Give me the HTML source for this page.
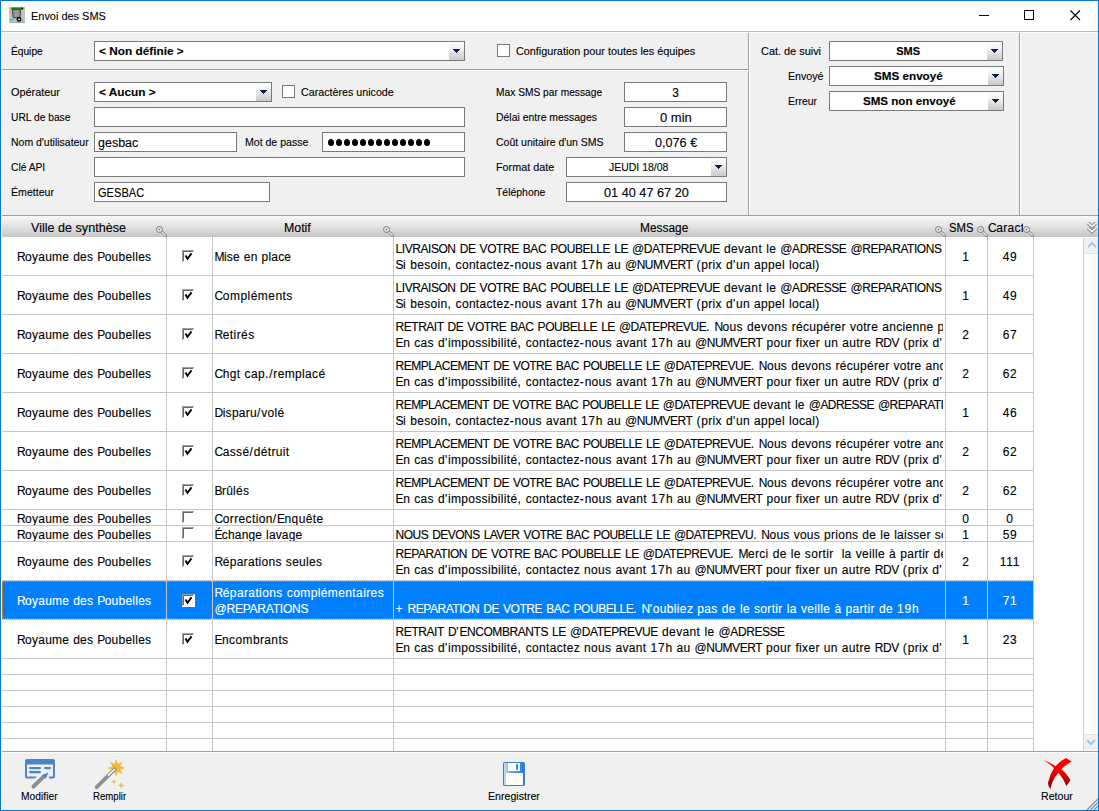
<!DOCTYPE html><html><head><meta charset="utf-8"><style>
html,body{margin:0;padding:0;}
body{width:1099px;height:811px;overflow:hidden;position:relative;background:#f0f0f0;font-family:"Liberation Sans",sans-serif;color:#000;}
.r{position:absolute;}
.t{position:absolute;white-space:nowrap;-webkit-text-stroke:0.12px currentColor;}
</style></head><body>
<div class="r" style="left:0px;top:0px;width:1099px;height:31px;background:#fff;"></div>
<div class="r" style="left:0px;top:31px;width:1099px;height:1px;background:#bababa;"></div>
<div class="r" style="left:1px;top:32px;width:1097px;height:1px;background:#fff;"></div>
<div class="r" style="left:1px;top:32px;width:1px;height:778px;background:#fff;"></div>
<svg class="r" style="left:9px;top:7px" width="16" height="16" viewBox="0 0 16 16">
<rect x="0" y="0" width="16" height="16" fill="#c2c2c2"/>
<rect x="0" y="15" width="16" height="1" fill="#a8a8a8"/>
<rect x="2" y="0.4" width="11.5" height="2" rx="1" fill="#0b8f0b"/>
<circle cx="13.3" cy="1.4" r="1" fill="#000"/>
<path d="M3.2 2.6 L11.6 2.6 L11 10.8 L4.2 10.8 Z" fill="#8c8c8c" stroke="#3a3a3a" stroke-width="0.9"/>
<rect x="5.5" y="3.5" width="4" height="6" fill="#9c9c9c"/>
<circle cx="10" cy="12.4" r="1.7" fill="#fff" stroke="#000" stroke-width="1.5"/>
<rect x="1" y="12" width="3.5" height="2" fill="#3fcbd8"/>
<rect x="12.4" y="12" width="1.6" height="2" fill="#3fcbd8"/>
</svg>
<div class="t" style="left:30.60px;top:11.27px;font-size:11.5px;line-height:11.5px;transform:scaleX(0.9513);transform-origin:0 0;">Envoi des SMS</div>
<div class="r" style="left:979px;top:15px;width:10px;height:1px;background:#000;"></div>
<div class="r" style="left:1024px;top:10px;width:10px;height:10px;border:1px solid #000;box-sizing:border-box;"></div>
<svg class="r" style="left:1070px;top:10px" width="11" height="11" viewBox="0 0 11 11"><path d="M0.5 0.5 L10 10 M10 0.5 L0.5 10" stroke="#000" stroke-width="1.1"/></svg>
<div class="r" style="left:2px;top:69px;width:747px;height:1px;background:#a0a0a0;"></div>
<div class="r" style="left:2px;top:70px;width:747px;height:1px;background:#fff;"></div>
<div class="r" style="left:748px;top:33px;width:1px;height:36px;background:#a0a0a0;"></div>
<div class="r" style="left:748px;top:71px;width:1px;height:144px;background:#a0a0a0;"></div>
<div class="r" style="left:749px;top:33px;width:1px;height:182px;background:#fff;"></div>
<div class="r" style="left:1019px;top:33px;width:1px;height:182px;background:#a0a0a0;"></div>
<div class="r" style="left:1020px;top:33px;width:1px;height:182px;background:#fff;"></div>
<div class="r" style="left:2px;top:215px;width:1096px;height:1px;background:#a0a0a0;"></div>
<div class="t" style="left:10.60px;top:45.69px;font-size:11px;line-height:11px;transform:scaleX(0.9258);transform-origin:0 0;">Équipe</div>
<div class="r" style="left:94px;top:41px;width:371px;height:20px;background:#fff;border:1px solid #7a7a7a;box-sizing:border-box;"></div>
<div class="r" style="left:449px;top:42px;width:15px;height:18px;background:linear-gradient(#ffffff,#f4f4f4 30%,#c9c9c9);"></div>
<div class="r" style="left:453px;top:49px;width:7px;height:1px;background:#0c1f44;"></div>
<div class="r" style="left:454px;top:50px;width:5px;height:1px;background:#0c1f44;"></div>
<div class="r" style="left:455px;top:51px;width:3px;height:1px;background:#0c1f44;"></div>
<div class="r" style="left:456px;top:52px;width:1px;height:1px;background:#0c1f44;"></div>
<div class="t" style="left:98.80px;top:45.69px;font-size:11px;line-height:11px;transform:scaleX(1.0737);transform-origin:0 0;font-weight:bold;">&lt; Non définie &gt;</div>
<div class="r" style="left:497px;top:44px;width:13px;height:13px;background:#fff;border:1px solid #7a7a7a;box-sizing:border-box;"></div>
<div class="t" style="left:515.70px;top:45.69px;font-size:11px;line-height:11px;transform:scaleX(0.9829);transform-origin:0 0;">Configuration pour toutes les équipes</div>
<div class="t" style="left:10.60px;top:86.69px;font-size:11px;line-height:11px;transform:scaleX(0.9887);transform-origin:0 0;">Opérateur</div>
<div class="r" style="left:94px;top:82px;width:178px;height:20px;background:#fff;border:1px solid #7a7a7a;box-sizing:border-box;"></div>
<div class="r" style="left:256px;top:83px;width:15px;height:18px;background:linear-gradient(#ffffff,#f4f4f4 30%,#c9c9c9);"></div>
<div class="r" style="left:260px;top:90px;width:7px;height:1px;background:#0c1f44;"></div>
<div class="r" style="left:261px;top:91px;width:5px;height:1px;background:#0c1f44;"></div>
<div class="r" style="left:262px;top:92px;width:3px;height:1px;background:#0c1f44;"></div>
<div class="r" style="left:263px;top:93px;width:1px;height:1px;background:#0c1f44;"></div>
<div class="t" style="left:98.80px;top:86.69px;font-size:11px;line-height:11px;transform:scaleX(1.0748);transform-origin:0 0;font-weight:bold;">&lt; Aucun &gt;</div>
<div class="r" style="left:282px;top:85px;width:13px;height:13px;background:#fff;border:1px solid #7a7a7a;box-sizing:border-box;"></div>
<div class="t" style="left:300.50px;top:86.69px;font-size:11px;line-height:11px;transform:scaleX(0.9720);transform-origin:0 0;">Caractères unicode</div>
<div class="t" style="left:10.60px;top:111.69px;font-size:11px;line-height:11px;transform:scaleX(0.9315);transform-origin:0 0;">URL de base</div>
<div class="r" style="left:94px;top:107px;width:371px;height:20px;background:#fff;border:1px solid #7a7a7a;box-sizing:border-box;"></div>
<div class="t" style="left:10.70px;top:136.69px;font-size:11px;line-height:11px;transform:scaleX(0.9522);transform-origin:0 0;">Nom d'utilisateur</div>
<div class="r" style="left:94px;top:132px;width:143px;height:20px;background:#fff;border:1px solid #7a7a7a;box-sizing:border-box;"></div>
<div class="t" style="left:98.00px;top:136.84px;font-size:12px;line-height:12px;transform:scaleX(1.0415);transform-origin:0 0;">gesbac</div>
<div class="t" style="left:244.80px;top:136.69px;font-size:11px;line-height:11px;transform:scaleX(0.9587);transform-origin:0 0;">Mot de passe</div>
<div class="r" style="left:322px;top:132px;width:143px;height:20px;background:#fff;border:1px solid #7a7a7a;box-sizing:border-box;"></div>
<div class="r" style="left:328.0px;top:139px;width:6px;height:7px;background:#000;border-radius:50%;"></div>
<div class="r" style="left:336.0px;top:139px;width:6px;height:7px;background:#000;border-radius:50%;"></div>
<div class="r" style="left:344.0px;top:139px;width:6px;height:7px;background:#000;border-radius:50%;"></div>
<div class="r" style="left:352.0px;top:139px;width:6px;height:7px;background:#000;border-radius:50%;"></div>
<div class="r" style="left:360.0px;top:139px;width:6px;height:7px;background:#000;border-radius:50%;"></div>
<div class="r" style="left:368.0px;top:139px;width:6px;height:7px;background:#000;border-radius:50%;"></div>
<div class="r" style="left:376.0px;top:139px;width:6px;height:7px;background:#000;border-radius:50%;"></div>
<div class="r" style="left:384.0px;top:139px;width:6px;height:7px;background:#000;border-radius:50%;"></div>
<div class="r" style="left:392.0px;top:139px;width:6px;height:7px;background:#000;border-radius:50%;"></div>
<div class="r" style="left:400.0px;top:139px;width:6px;height:7px;background:#000;border-radius:50%;"></div>
<div class="r" style="left:408.0px;top:139px;width:6px;height:7px;background:#000;border-radius:50%;"></div>
<div class="r" style="left:416.0px;top:139px;width:6px;height:7px;background:#000;border-radius:50%;"></div>
<div class="r" style="left:424.0px;top:139px;width:6px;height:7px;background:#000;border-radius:50%;"></div>
<div class="t" style="left:10.60px;top:161.69px;font-size:11px;line-height:11px;transform:scaleX(0.9319);transform-origin:0 0;">Clé API</div>
<div class="r" style="left:94px;top:157px;width:371px;height:20px;background:#fff;border:1px solid #7a7a7a;box-sizing:border-box;"></div>
<div class="t" style="left:10.60px;top:186.69px;font-size:11px;line-height:11px;transform:scaleX(0.9630);transform-origin:0 0;">Émetteur</div>
<div class="r" style="left:94px;top:182px;width:176px;height:20px;background:#fff;border:1px solid #7a7a7a;box-sizing:border-box;"></div>
<div class="t" style="left:98.00px;top:186.84px;font-size:12px;line-height:12px;transform:scaleX(0.9235);transform-origin:0 0;">GESBAC</div>
<div class="t" style="left:495.80px;top:86.69px;font-size:11px;line-height:11px;transform:scaleX(0.9282);transform-origin:0 0;">Max SMS par message</div>
<div class="r" style="left:624px;top:82px;width:103px;height:20px;background:#fff;border:1px solid #7a7a7a;box-sizing:border-box;"></div>
<div class="t" style="left:624px;top:86.84px;font-size:12px;line-height:12px;width:103px;text-align:center;">3</div>
<div class="t" style="left:495.80px;top:111.69px;font-size:11px;line-height:11px;transform:scaleX(0.9487);transform-origin:0 0;">Délai entre messages</div>
<div class="r" style="left:624px;top:107px;width:103px;height:20px;background:#fff;border:1px solid #7a7a7a;box-sizing:border-box;"></div>
<div class="t" style="left:660.40px;top:111.84px;font-size:12px;line-height:12px;transform:scaleX(1.0848);transform-origin:0 0;">0 min</div>
<div class="t" style="left:495.80px;top:136.69px;font-size:11px;line-height:11px;transform:scaleX(0.9534);transform-origin:0 0;">Coût unitaire d'un SMS</div>
<div class="r" style="left:624px;top:132px;width:103px;height:20px;background:#fff;border:1px solid #7a7a7a;box-sizing:border-box;"></div>
<div class="t" style="left:654.50px;top:136.84px;font-size:12px;line-height:12px;transform:scaleX(1.0529);transform-origin:0 0;">0,076 €</div>
<div class="t" style="left:495.80px;top:161.69px;font-size:11px;line-height:11px;transform:scaleX(0.9817);transform-origin:0 0;">Format date</div>
<div class="r" style="left:566px;top:157px;width:161px;height:20px;background:#fff;border:1px solid #7a7a7a;box-sizing:border-box;"></div>
<div class="r" style="left:711px;top:158px;width:15px;height:18px;background:linear-gradient(#ffffff,#f4f4f4 30%,#c9c9c9);"></div>
<div class="r" style="left:715px;top:165px;width:7px;height:1px;background:#0c1f44;"></div>
<div class="r" style="left:716px;top:166px;width:5px;height:1px;background:#0c1f44;"></div>
<div class="r" style="left:717px;top:167px;width:3px;height:1px;background:#0c1f44;"></div>
<div class="r" style="left:718px;top:168px;width:1px;height:1px;background:#0c1f44;"></div>
<div class="t" style="left:608.70px;top:161.69px;font-size:11px;line-height:11px;transform:scaleX(0.9527);transform-origin:0 0;">JEUDI 18/08</div>
<div class="t" style="left:495.80px;top:186.69px;font-size:11px;line-height:11px;transform:scaleX(0.9485);transform-origin:0 0;">Téléphone</div>
<div class="r" style="left:566px;top:182px;width:161px;height:20px;background:#fff;border:1px solid #7a7a7a;box-sizing:border-box;"></div>
<div class="t" style="left:604.30px;top:186.84px;font-size:12px;line-height:12px;transform:scaleX(1.0585);transform-origin:0 0;">01 40 47 67 20</div>
<div class="t" style="left:761.00px;top:45.69px;font-size:11px;line-height:11px;transform:scaleX(0.9920);transform-origin:0 0;">Cat. de suivi</div>
<div class="r" style="left:829px;top:41px;width:174px;height:20px;background:#fff;border:1px solid #7a7a7a;box-sizing:border-box;"></div>
<div class="r" style="left:987px;top:42px;width:15px;height:18px;background:linear-gradient(#ffffff,#f4f4f4 30%,#c9c9c9);"></div>
<div class="r" style="left:991px;top:49px;width:7px;height:1px;background:#0c1f44;"></div>
<div class="r" style="left:992px;top:50px;width:5px;height:1px;background:#0c1f44;"></div>
<div class="r" style="left:993px;top:51px;width:3px;height:1px;background:#0c1f44;"></div>
<div class="r" style="left:994px;top:52px;width:1px;height:1px;background:#0c1f44;"></div>
<div class="t" style="left:896.20px;top:45.69px;font-size:11px;line-height:11px;transform:scaleX(1.0000);transform-origin:0 0;font-weight:bold;">SMS</div>
<div class="t" style="left:787.70px;top:70.69px;font-size:11px;line-height:11px;transform:scaleX(0.9652);transform-origin:0 0;">Envoyé</div>
<div class="r" style="left:829px;top:66px;width:175px;height:20px;background:#fff;border:1px solid #7a7a7a;box-sizing:border-box;"></div>
<div class="r" style="left:988px;top:67px;width:15px;height:18px;background:linear-gradient(#ffffff,#f4f4f4 30%,#c9c9c9);"></div>
<div class="r" style="left:992px;top:74px;width:7px;height:1px;background:#0c1f44;"></div>
<div class="r" style="left:993px;top:75px;width:5px;height:1px;background:#0c1f44;"></div>
<div class="r" style="left:994px;top:76px;width:3px;height:1px;background:#0c1f44;"></div>
<div class="r" style="left:995px;top:77px;width:1px;height:1px;background:#0c1f44;"></div>
<div class="t" style="left:874.00px;top:70.69px;font-size:11px;line-height:11px;transform:scaleX(1.0605);transform-origin:0 0;font-weight:bold;">SMS envoyé</div>
<div class="t" style="left:787.70px;top:95.69px;font-size:11px;line-height:11px;transform:scaleX(0.9483);transform-origin:0 0;">Erreur</div>
<div class="r" style="left:829px;top:91px;width:175px;height:20px;background:#fff;border:1px solid #7a7a7a;box-sizing:border-box;"></div>
<div class="r" style="left:988px;top:92px;width:15px;height:18px;background:linear-gradient(#ffffff,#f4f4f4 30%,#c9c9c9);"></div>
<div class="r" style="left:992px;top:99px;width:7px;height:1px;background:#0c1f44;"></div>
<div class="r" style="left:993px;top:100px;width:5px;height:1px;background:#0c1f44;"></div>
<div class="r" style="left:994px;top:101px;width:3px;height:1px;background:#0c1f44;"></div>
<div class="r" style="left:995px;top:102px;width:1px;height:1px;background:#0c1f44;"></div>
<div class="t" style="left:862.50px;top:95.69px;font-size:11px;line-height:11px;transform:scaleX(1.0524);transform-origin:0 0;font-weight:bold;">SMS non envoyé</div>
<div class="r" style="left:2px;top:216px;width:1096px;height:21px;background:linear-gradient(#f8f8f8,#e2e2e2 50%,#c5c5c5);"></div>
<div class="r" style="left:2px;top:237px;width:1096px;height:514px;background:#fff;"></div>
<div class="t" style="left:31.40px;top:221.84px;font-size:12px;line-height:12px;transform:scaleX(1.0492);transform-origin:0 0;">Ville de synthèse</div>
<div class="t" style="left:284.40px;top:221.84px;font-size:12px;line-height:12px;transform:scaleX(1.0274);transform-origin:0 0;">Motif</div>
<div class="t" style="left:639.60px;top:221.84px;font-size:12px;line-height:12px;transform:scaleX(0.9915);transform-origin:0 0;">Message</div>
<div class="t" style="left:948.50px;top:221.84px;font-size:12px;line-height:12px;transform:scaleX(0.9423);transform-origin:0 0;">SMS</div>
<div class="t" style="left:988px;top:221px;width:35px;height:14px;overflow:hidden;font-size:12px;line-height:14px;"><span style="letter-spacing:-0.48px">C</span><span style="letter-spacing:0.31px">aract</span></div>
<svg class="r" style="left:155px;top:225px" width="12" height="12" viewBox="0 0 12 12"><path d="M6.6 6.6 L11.2 11.2" stroke="#8f8f8f" stroke-width="3" stroke-linecap="square"/><path d="M6.8 6.8 L10.6 10.6" stroke="#fff" stroke-width="1.1"/><circle cx="4.5" cy="4.5" r="2.9" fill="#fff" stroke="#8f8f8f" stroke-width="1.2"/><rect x="3.5" y="3.5" width="2" height="2" fill="#8f8f8f"/></svg>
<svg class="r" style="left:382px;top:225px" width="12" height="12" viewBox="0 0 12 12"><path d="M6.6 6.6 L11.2 11.2" stroke="#8f8f8f" stroke-width="3" stroke-linecap="square"/><path d="M6.8 6.8 L10.6 10.6" stroke="#fff" stroke-width="1.1"/><circle cx="4.5" cy="4.5" r="2.9" fill="#fff" stroke="#8f8f8f" stroke-width="1.2"/><rect x="3.5" y="3.5" width="2" height="2" fill="#8f8f8f"/></svg>
<svg class="r" style="left:934px;top:225px" width="12" height="12" viewBox="0 0 12 12"><path d="M6.6 6.6 L11.2 11.2" stroke="#8f8f8f" stroke-width="3" stroke-linecap="square"/><path d="M6.8 6.8 L10.6 10.6" stroke="#fff" stroke-width="1.1"/><circle cx="4.5" cy="4.5" r="2.9" fill="#fff" stroke="#8f8f8f" stroke-width="1.2"/><rect x="3.5" y="3.5" width="2" height="2" fill="#8f8f8f"/></svg>
<svg class="r" style="left:976px;top:225px" width="12" height="12" viewBox="0 0 12 12"><path d="M6.6 6.6 L11.2 11.2" stroke="#8f8f8f" stroke-width="3" stroke-linecap="square"/><path d="M6.8 6.8 L10.6 10.6" stroke="#fff" stroke-width="1.1"/><circle cx="4.5" cy="4.5" r="2.9" fill="#fff" stroke="#8f8f8f" stroke-width="1.2"/><rect x="3.5" y="3.5" width="2" height="2" fill="#8f8f8f"/></svg>
<svg class="r" style="left:1022px;top:225px" width="12" height="12" viewBox="0 0 12 12"><path d="M6.6 6.6 L11.2 11.2" stroke="#8f8f8f" stroke-width="3" stroke-linecap="square"/><path d="M6.8 6.8 L10.6 10.6" stroke="#fff" stroke-width="1.1"/><circle cx="4.5" cy="4.5" r="2.9" fill="#fff" stroke="#8f8f8f" stroke-width="1.2"/><rect x="3.5" y="3.5" width="2" height="2" fill="#8f8f8f"/></svg>
<svg class="r" style="left:1086px;top:221px" width="12" height="14" viewBox="0 0 12 14"><path d="M2 2 L6 5.5 L10 2 M2 7 L6 10.5 L10 7" fill="none" stroke="#8c8c8c" stroke-width="3.6" stroke-linejoin="miter"/><path d="M2 2 L6 5.5 L10 2 M2 7 L6 10.5 L10 7" fill="none" stroke="#fff" stroke-width="1.6" stroke-linejoin="miter"/></svg>
<div class="t" style="left:2px;top:237px;width:164px;height:38px;overflow:hidden;color:#000;font-size:12px;text-align:left;"><div style="position:absolute;left:0;right:0;top:12.0px;"><div style="height:16px;line-height:16px;padding-left:15.00px;"><span style="letter-spacing:-0.566px">R</span><span style="letter-spacing:0.235px">oyaume</span><span style="letter-spacing:0.648px"> </span><span style="letter-spacing:0.235px">des</span><span style="letter-spacing:0.648px"> </span><span style="letter-spacing:-0.566px">P</span><span style="letter-spacing:0.235px">oubelles</span></div></div></div>
<div class="r" style="left:182px;top:250px;width:13px;height:13px;background:#fff;"></div>
<div class="r" style="left:182px;top:250px;width:12px;height:1px;background:#a0a0a0;"></div>
<div class="r" style="left:182px;top:250px;width:1px;height:12px;background:#a0a0a0;"></div>
<div class="r" style="left:183px;top:251px;width:10px;height:1px;background:#696969;"></div>
<div class="r" style="left:183px;top:251px;width:1px;height:10px;background:#696969;"></div>
<svg class="r" style="left:182px;top:250px" width="13" height="13" viewBox="0 0 13 13"><path d="M3.5 5.4 L5.5 8.7 L9.5 3.4" fill="none" stroke="#000" stroke-width="1.9"/></svg>
<div class="t" style="left:212px;top:237px;width:181px;height:38px;overflow:hidden;color:#000;font-size:12px;text-align:left;"><div style="position:absolute;left:0;right:0;top:12.0px;"><div style="height:16px;line-height:16px;padding-left:2.50px;"><span style="letter-spacing:-0.600px">M</span><span style="letter-spacing:0.201px">ise</span><span style="letter-spacing:0.614px"> </span><span style="letter-spacing:0.201px">en</span><span style="letter-spacing:0.614px"> </span><span style="letter-spacing:0.201px">place</span></div></div></div>
<div class="t" style="left:393px;top:237px;width:550px;height:38px;overflow:hidden;color:#000;font-size:12px;text-align:left;"><div style="position:absolute;left:0;right:0;top:4.0px;"><div style="height:16px;line-height:16px;padding-left:2.60px;"><span style="letter-spacing:-0.447px">LIVRAISON</span><span style="letter-spacing:0.767px"> </span><span style="letter-spacing:-0.447px">DE</span><span style="letter-spacing:0.767px"> </span><span style="letter-spacing:-0.447px">VOTRE</span><span style="letter-spacing:0.767px"> </span><span style="letter-spacing:-0.447px">BAC</span><span style="letter-spacing:0.767px"> </span><span style="letter-spacing:-0.447px">POUBELLE</span><span style="letter-spacing:0.767px"> </span><span style="letter-spacing:-0.447px">LE</span><span style="letter-spacing:0.767px"> </span><span style="letter-spacing:-0.447px">@DATEPREVUE</span><span style="letter-spacing:0.767px"> </span><span style="letter-spacing:0.354px">devant</span><span style="letter-spacing:0.767px"> </span><span style="letter-spacing:0.354px">le</span><span style="letter-spacing:0.767px"> </span><span style="letter-spacing:-0.447px">@ADRESSE</span><span style="letter-spacing:0.767px"> </span><span style="letter-spacing:-0.447px">@REPARATIONS</span></div><div style="height:16px;line-height:16px;padding-left:2.60px;"><span style="letter-spacing:-0.490px">S</span><span style="letter-spacing:0.311px">i</span><span style="letter-spacing:0.724px"> </span><span style="letter-spacing:0.311px">besoin</span><span style="letter-spacing:0.802px">,</span><span style="letter-spacing:0.724px"> </span><span style="letter-spacing:0.311px">contactez</span><span style="letter-spacing:0.802px">-</span><span style="letter-spacing:0.311px">nous</span><span style="letter-spacing:0.724px"> </span><span style="letter-spacing:0.311px">avant</span><span style="letter-spacing:0.724px"> </span><span style="letter-spacing:0.802px">17</span><span style="letter-spacing:0.311px">h</span><span style="letter-spacing:0.724px"> </span><span style="letter-spacing:0.311px">au</span><span style="letter-spacing:0.724px"> </span><span style="letter-spacing:-0.490px">@NUMVERT</span><span style="letter-spacing:0.724px"> </span><span style="letter-spacing:0.802px">(</span><span style="letter-spacing:0.311px">prix</span><span style="letter-spacing:0.724px"> </span><span style="letter-spacing:0.311px">d</span><span style="letter-spacing:0.802px">'</span><span style="letter-spacing:0.311px">un</span><span style="letter-spacing:0.724px"> </span><span style="letter-spacing:0.311px">appel</span><span style="letter-spacing:0.724px"> </span><span style="letter-spacing:0.311px">local</span><span style="letter-spacing:0.802px">)</span></div></div></div>
<div class="t" style="left:945px;top:237px;width:42px;height:38px;overflow:hidden;color:#000;font-size:12px;text-align:center;"><div style="position:absolute;left:0;right:0;top:12.0px;"><div style="height:16px;line-height:16px;padding-left:0px;"><span style="letter-spacing:0.69px">1</span></div></div></div>
<div class="t" style="left:987px;top:237px;width:46px;height:38px;overflow:hidden;color:#000;font-size:12px;text-align:center;"><div style="position:absolute;left:0;right:0;top:12.0px;"><div style="height:16px;line-height:16px;padding-left:0px;"><span style="letter-spacing:0.69px">49</span></div></div></div>
<div class="r" style="left:2px;top:275px;width:1032px;height:1px;background:#c6c6c6;"></div>
<div class="t" style="left:2px;top:276px;width:164px;height:38px;overflow:hidden;color:#000;font-size:12px;text-align:left;"><div style="position:absolute;left:0;right:0;top:12.0px;"><div style="height:16px;line-height:16px;padding-left:15.00px;"><span style="letter-spacing:-0.566px">R</span><span style="letter-spacing:0.235px">oyaume</span><span style="letter-spacing:0.648px"> </span><span style="letter-spacing:0.235px">des</span><span style="letter-spacing:0.648px"> </span><span style="letter-spacing:-0.566px">P</span><span style="letter-spacing:0.235px">oubelles</span></div></div></div>
<div class="r" style="left:182px;top:289px;width:13px;height:13px;background:#fff;"></div>
<div class="r" style="left:182px;top:289px;width:12px;height:1px;background:#a0a0a0;"></div>
<div class="r" style="left:182px;top:289px;width:1px;height:12px;background:#a0a0a0;"></div>
<div class="r" style="left:183px;top:290px;width:10px;height:1px;background:#696969;"></div>
<div class="r" style="left:183px;top:290px;width:1px;height:10px;background:#696969;"></div>
<svg class="r" style="left:182px;top:289px" width="13" height="13" viewBox="0 0 13 13"><path d="M3.5 5.4 L5.5 8.7 L9.5 3.4" fill="none" stroke="#000" stroke-width="1.9"/></svg>
<div class="t" style="left:212px;top:276px;width:181px;height:38px;overflow:hidden;color:#000;font-size:12px;text-align:left;"><div style="position:absolute;left:0;right:0;top:12.0px;"><div style="height:16px;line-height:16px;padding-left:2.50px;"><span style="letter-spacing:-0.344px">C</span><span style="letter-spacing:0.457px">ompléments</span></div></div></div>
<div class="t" style="left:393px;top:276px;width:550px;height:38px;overflow:hidden;color:#000;font-size:12px;text-align:left;"><div style="position:absolute;left:0;right:0;top:4.0px;"><div style="height:16px;line-height:16px;padding-left:2.60px;"><span style="letter-spacing:-0.447px">LIVRAISON</span><span style="letter-spacing:0.767px"> </span><span style="letter-spacing:-0.447px">DE</span><span style="letter-spacing:0.767px"> </span><span style="letter-spacing:-0.447px">VOTRE</span><span style="letter-spacing:0.767px"> </span><span style="letter-spacing:-0.447px">BAC</span><span style="letter-spacing:0.767px"> </span><span style="letter-spacing:-0.447px">POUBELLE</span><span style="letter-spacing:0.767px"> </span><span style="letter-spacing:-0.447px">LE</span><span style="letter-spacing:0.767px"> </span><span style="letter-spacing:-0.447px">@DATEPREVUE</span><span style="letter-spacing:0.767px"> </span><span style="letter-spacing:0.354px">devant</span><span style="letter-spacing:0.767px"> </span><span style="letter-spacing:0.354px">le</span><span style="letter-spacing:0.767px"> </span><span style="letter-spacing:-0.447px">@ADRESSE</span><span style="letter-spacing:0.767px"> </span><span style="letter-spacing:-0.447px">@REPARATIONS</span></div><div style="height:16px;line-height:16px;padding-left:2.60px;"><span style="letter-spacing:-0.490px">S</span><span style="letter-spacing:0.311px">i</span><span style="letter-spacing:0.724px"> </span><span style="letter-spacing:0.311px">besoin</span><span style="letter-spacing:0.802px">,</span><span style="letter-spacing:0.724px"> </span><span style="letter-spacing:0.311px">contactez</span><span style="letter-spacing:0.802px">-</span><span style="letter-spacing:0.311px">nous</span><span style="letter-spacing:0.724px"> </span><span style="letter-spacing:0.311px">avant</span><span style="letter-spacing:0.724px"> </span><span style="letter-spacing:0.802px">17</span><span style="letter-spacing:0.311px">h</span><span style="letter-spacing:0.724px"> </span><span style="letter-spacing:0.311px">au</span><span style="letter-spacing:0.724px"> </span><span style="letter-spacing:-0.490px">@NUMVERT</span><span style="letter-spacing:0.724px"> </span><span style="letter-spacing:0.802px">(</span><span style="letter-spacing:0.311px">prix</span><span style="letter-spacing:0.724px"> </span><span style="letter-spacing:0.311px">d</span><span style="letter-spacing:0.802px">'</span><span style="letter-spacing:0.311px">un</span><span style="letter-spacing:0.724px"> </span><span style="letter-spacing:0.311px">appel</span><span style="letter-spacing:0.724px"> </span><span style="letter-spacing:0.311px">local</span><span style="letter-spacing:0.802px">)</span></div></div></div>
<div class="t" style="left:945px;top:276px;width:42px;height:38px;overflow:hidden;color:#000;font-size:12px;text-align:center;"><div style="position:absolute;left:0;right:0;top:12.0px;"><div style="height:16px;line-height:16px;padding-left:0px;"><span style="letter-spacing:0.69px">1</span></div></div></div>
<div class="t" style="left:987px;top:276px;width:46px;height:38px;overflow:hidden;color:#000;font-size:12px;text-align:center;"><div style="position:absolute;left:0;right:0;top:12.0px;"><div style="height:16px;line-height:16px;padding-left:0px;"><span style="letter-spacing:0.69px">49</span></div></div></div>
<div class="r" style="left:2px;top:314px;width:1032px;height:1px;background:#c6c6c6;"></div>
<div class="t" style="left:2px;top:315px;width:164px;height:38px;overflow:hidden;color:#000;font-size:12px;text-align:left;"><div style="position:absolute;left:0;right:0;top:12.0px;"><div style="height:16px;line-height:16px;padding-left:15.00px;"><span style="letter-spacing:-0.566px">R</span><span style="letter-spacing:0.235px">oyaume</span><span style="letter-spacing:0.648px"> </span><span style="letter-spacing:0.235px">des</span><span style="letter-spacing:0.648px"> </span><span style="letter-spacing:-0.566px">P</span><span style="letter-spacing:0.235px">oubelles</span></div></div></div>
<div class="r" style="left:182px;top:328px;width:13px;height:13px;background:#fff;"></div>
<div class="r" style="left:182px;top:328px;width:12px;height:1px;background:#a0a0a0;"></div>
<div class="r" style="left:182px;top:328px;width:1px;height:12px;background:#a0a0a0;"></div>
<div class="r" style="left:183px;top:329px;width:10px;height:1px;background:#696969;"></div>
<div class="r" style="left:183px;top:329px;width:1px;height:10px;background:#696969;"></div>
<svg class="r" style="left:182px;top:328px" width="13" height="13" viewBox="0 0 13 13"><path d="M3.5 5.4 L5.5 8.7 L9.5 3.4" fill="none" stroke="#000" stroke-width="1.9"/></svg>
<div class="t" style="left:212px;top:315px;width:181px;height:38px;overflow:hidden;color:#000;font-size:12px;text-align:left;"><div style="position:absolute;left:0;right:0;top:12.0px;"><div style="height:16px;line-height:16px;padding-left:2.50px;"><span style="letter-spacing:-0.386px">R</span><span style="letter-spacing:0.415px">etirés</span></div></div></div>
<div class="t" style="left:393px;top:315px;width:550px;height:38px;overflow:hidden;color:#000;font-size:12px;text-align:left;"><div style="position:absolute;left:0;right:0;top:4.0px;"><div style="height:16px;line-height:16px;padding-left:2.60px;"><span style="letter-spacing:-0.487px">RETRAIT</span><span style="letter-spacing:0.727px"> </span><span style="letter-spacing:-0.487px">DE</span><span style="letter-spacing:0.727px"> </span><span style="letter-spacing:-0.487px">VOTRE</span><span style="letter-spacing:0.727px"> </span><span style="letter-spacing:-0.487px">BAC</span><span style="letter-spacing:0.727px"> </span><span style="letter-spacing:-0.487px">POUBELLE</span><span style="letter-spacing:0.727px"> </span><span style="letter-spacing:-0.487px">LE</span><span style="letter-spacing:0.727px"> </span><span style="letter-spacing:-0.487px">@DATEPREVUE</span><span style="letter-spacing:0.805px">.</span><span style="letter-spacing:0.727px"> </span><span style="letter-spacing:-0.487px">N</span><span style="letter-spacing:0.314px">ous</span><span style="letter-spacing:0.727px"> </span><span style="letter-spacing:0.314px">devons</span><span style="letter-spacing:0.727px"> </span><span style="letter-spacing:0.314px">récupérer</span><span style="letter-spacing:0.727px"> </span><span style="letter-spacing:0.314px">votre</span><span style="letter-spacing:0.727px"> </span><span style="letter-spacing:0.314px">ancienne</span><span style="letter-spacing:0.727px"> </span><span style="letter-spacing:0.314px">poubelle</span></div><div style="height:16px;line-height:16px;padding-left:2.60px;"><span style="letter-spacing:-0.488px">E</span><span style="letter-spacing:0.313px">n</span><span style="letter-spacing:0.726px"> </span><span style="letter-spacing:0.313px">cas</span><span style="letter-spacing:0.726px"> </span><span style="letter-spacing:0.313px">d</span><span style="letter-spacing:0.804px">'</span><span style="letter-spacing:0.313px">impossibilité</span><span style="letter-spacing:0.804px">,</span><span style="letter-spacing:0.726px"> </span><span style="letter-spacing:0.313px">contactez</span><span style="letter-spacing:0.804px">-</span><span style="letter-spacing:0.313px">nous</span><span style="letter-spacing:0.726px"> </span><span style="letter-spacing:0.313px">avant</span><span style="letter-spacing:0.726px"> </span><span style="letter-spacing:0.804px">17</span><span style="letter-spacing:0.313px">h</span><span style="letter-spacing:0.726px"> </span><span style="letter-spacing:0.313px">au</span><span style="letter-spacing:0.726px"> </span><span style="letter-spacing:-0.488px">@NUMVERT</span><span style="letter-spacing:0.726px"> </span><span style="letter-spacing:0.313px">pour</span><span style="letter-spacing:0.726px"> </span><span style="letter-spacing:0.313px">fixer</span><span style="letter-spacing:0.726px"> </span><span style="letter-spacing:0.313px">un</span><span style="letter-spacing:0.726px"> </span><span style="letter-spacing:0.313px">autre</span><span style="letter-spacing:0.726px"> </span><span style="letter-spacing:-0.488px">RDV</span><span style="letter-spacing:0.726px"> </span><span style="letter-spacing:0.804px">(</span><span style="letter-spacing:0.313px">prix</span><span style="letter-spacing:0.726px"> </span><span style="letter-spacing:0.313px">d</span><span style="letter-spacing:0.804px">'</span><span style="letter-spacing:0.313px">un</span><span style="letter-spacing:0.726px"> </span><span style="letter-spacing:0.313px">appel</span><span style="letter-spacing:0.726px"> </span><span style="letter-spacing:0.313px">local</span><span style="letter-spacing:0.804px">)</span></div></div></div>
<div class="t" style="left:945px;top:315px;width:42px;height:38px;overflow:hidden;color:#000;font-size:12px;text-align:center;"><div style="position:absolute;left:0;right:0;top:12.0px;"><div style="height:16px;line-height:16px;padding-left:0px;"><span style="letter-spacing:0.69px">2</span></div></div></div>
<div class="t" style="left:987px;top:315px;width:46px;height:38px;overflow:hidden;color:#000;font-size:12px;text-align:center;"><div style="position:absolute;left:0;right:0;top:12.0px;"><div style="height:16px;line-height:16px;padding-left:0px;"><span style="letter-spacing:0.69px">67</span></div></div></div>
<div class="r" style="left:2px;top:353px;width:1032px;height:1px;background:#c6c6c6;"></div>
<div class="t" style="left:2px;top:354px;width:164px;height:38px;overflow:hidden;color:#000;font-size:12px;text-align:left;"><div style="position:absolute;left:0;right:0;top:12.0px;"><div style="height:16px;line-height:16px;padding-left:15.00px;"><span style="letter-spacing:-0.566px">R</span><span style="letter-spacing:0.235px">oyaume</span><span style="letter-spacing:0.648px"> </span><span style="letter-spacing:0.235px">des</span><span style="letter-spacing:0.648px"> </span><span style="letter-spacing:-0.566px">P</span><span style="letter-spacing:0.235px">oubelles</span></div></div></div>
<div class="r" style="left:182px;top:367px;width:13px;height:13px;background:#fff;"></div>
<div class="r" style="left:182px;top:367px;width:12px;height:1px;background:#a0a0a0;"></div>
<div class="r" style="left:182px;top:367px;width:1px;height:12px;background:#a0a0a0;"></div>
<div class="r" style="left:183px;top:368px;width:10px;height:1px;background:#696969;"></div>
<div class="r" style="left:183px;top:368px;width:1px;height:10px;background:#696969;"></div>
<svg class="r" style="left:182px;top:367px" width="13" height="13" viewBox="0 0 13 13"><path d="M3.5 5.4 L5.5 8.7 L9.5 3.4" fill="none" stroke="#000" stroke-width="1.9"/></svg>
<div class="t" style="left:212px;top:354px;width:181px;height:38px;overflow:hidden;color:#000;font-size:12px;text-align:left;"><div style="position:absolute;left:0;right:0;top:12.0px;"><div style="height:16px;line-height:16px;padding-left:2.50px;"><span style="letter-spacing:-0.452px">C</span><span style="letter-spacing:0.349px">hgt</span><span style="letter-spacing:0.762px"> </span><span style="letter-spacing:0.349px">cap</span><span style="letter-spacing:0.840px">./</span><span style="letter-spacing:0.349px">remplacé</span></div></div></div>
<div class="t" style="left:393px;top:354px;width:550px;height:38px;overflow:hidden;color:#000;font-size:12px;text-align:left;"><div style="position:absolute;left:0;right:0;top:4.0px;"><div style="height:16px;line-height:16px;padding-left:2.60px;"><span style="letter-spacing:-0.524px">REMPLACEMENT</span><span style="letter-spacing:0.690px"> </span><span style="letter-spacing:-0.524px">DE</span><span style="letter-spacing:0.690px"> </span><span style="letter-spacing:-0.524px">VOTRE</span><span style="letter-spacing:0.690px"> </span><span style="letter-spacing:-0.524px">BAC</span><span style="letter-spacing:0.690px"> </span><span style="letter-spacing:-0.524px">POUBELLE</span><span style="letter-spacing:0.690px"> </span><span style="letter-spacing:-0.524px">LE</span><span style="letter-spacing:0.690px"> </span><span style="letter-spacing:-0.524px">@DATEPREVUE</span><span style="letter-spacing:0.768px">.</span><span style="letter-spacing:0.690px"> </span><span style="letter-spacing:-0.524px">N</span><span style="letter-spacing:0.277px">ous</span><span style="letter-spacing:0.690px"> </span><span style="letter-spacing:0.277px">devons</span><span style="letter-spacing:0.690px"> </span><span style="letter-spacing:0.277px">récupérer</span><span style="letter-spacing:0.690px"> </span><span style="letter-spacing:0.277px">votre</span><span style="letter-spacing:0.690px"> </span><span style="letter-spacing:0.277px">ancienne</span><span style="letter-spacing:0.690px"> </span><span style="letter-spacing:0.277px">poubelle</span></div><div style="height:16px;line-height:16px;padding-left:2.60px;"><span style="letter-spacing:-0.488px">E</span><span style="letter-spacing:0.313px">n</span><span style="letter-spacing:0.726px"> </span><span style="letter-spacing:0.313px">cas</span><span style="letter-spacing:0.726px"> </span><span style="letter-spacing:0.313px">d</span><span style="letter-spacing:0.804px">'</span><span style="letter-spacing:0.313px">impossibilité</span><span style="letter-spacing:0.804px">,</span><span style="letter-spacing:0.726px"> </span><span style="letter-spacing:0.313px">contactez</span><span style="letter-spacing:0.804px">-</span><span style="letter-spacing:0.313px">nous</span><span style="letter-spacing:0.726px"> </span><span style="letter-spacing:0.313px">avant</span><span style="letter-spacing:0.726px"> </span><span style="letter-spacing:0.804px">17</span><span style="letter-spacing:0.313px">h</span><span style="letter-spacing:0.726px"> </span><span style="letter-spacing:0.313px">au</span><span style="letter-spacing:0.726px"> </span><span style="letter-spacing:-0.488px">@NUMVERT</span><span style="letter-spacing:0.726px"> </span><span style="letter-spacing:0.313px">pour</span><span style="letter-spacing:0.726px"> </span><span style="letter-spacing:0.313px">fixer</span><span style="letter-spacing:0.726px"> </span><span style="letter-spacing:0.313px">un</span><span style="letter-spacing:0.726px"> </span><span style="letter-spacing:0.313px">autre</span><span style="letter-spacing:0.726px"> </span><span style="letter-spacing:-0.488px">RDV</span><span style="letter-spacing:0.726px"> </span><span style="letter-spacing:0.804px">(</span><span style="letter-spacing:0.313px">prix</span><span style="letter-spacing:0.726px"> </span><span style="letter-spacing:0.313px">d</span><span style="letter-spacing:0.804px">'</span><span style="letter-spacing:0.313px">un</span><span style="letter-spacing:0.726px"> </span><span style="letter-spacing:0.313px">appel</span><span style="letter-spacing:0.726px"> </span><span style="letter-spacing:0.313px">local</span><span style="letter-spacing:0.804px">)</span></div></div></div>
<div class="t" style="left:945px;top:354px;width:42px;height:38px;overflow:hidden;color:#000;font-size:12px;text-align:center;"><div style="position:absolute;left:0;right:0;top:12.0px;"><div style="height:16px;line-height:16px;padding-left:0px;"><span style="letter-spacing:0.69px">2</span></div></div></div>
<div class="t" style="left:987px;top:354px;width:46px;height:38px;overflow:hidden;color:#000;font-size:12px;text-align:center;"><div style="position:absolute;left:0;right:0;top:12.0px;"><div style="height:16px;line-height:16px;padding-left:0px;"><span style="letter-spacing:0.69px">62</span></div></div></div>
<div class="r" style="left:2px;top:392px;width:1032px;height:1px;background:#c6c6c6;"></div>
<div class="t" style="left:2px;top:393px;width:164px;height:38px;overflow:hidden;color:#000;font-size:12px;text-align:left;"><div style="position:absolute;left:0;right:0;top:12.0px;"><div style="height:16px;line-height:16px;padding-left:15.00px;"><span style="letter-spacing:-0.566px">R</span><span style="letter-spacing:0.235px">oyaume</span><span style="letter-spacing:0.648px"> </span><span style="letter-spacing:0.235px">des</span><span style="letter-spacing:0.648px"> </span><span style="letter-spacing:-0.566px">P</span><span style="letter-spacing:0.235px">oubelles</span></div></div></div>
<div class="r" style="left:182px;top:406px;width:13px;height:13px;background:#fff;"></div>
<div class="r" style="left:182px;top:406px;width:12px;height:1px;background:#a0a0a0;"></div>
<div class="r" style="left:182px;top:406px;width:1px;height:12px;background:#a0a0a0;"></div>
<div class="r" style="left:183px;top:407px;width:10px;height:1px;background:#696969;"></div>
<div class="r" style="left:183px;top:407px;width:1px;height:10px;background:#696969;"></div>
<svg class="r" style="left:182px;top:406px" width="13" height="13" viewBox="0 0 13 13"><path d="M3.5 5.4 L5.5 8.7 L9.5 3.4" fill="none" stroke="#000" stroke-width="1.9"/></svg>
<div class="t" style="left:212px;top:393px;width:181px;height:38px;overflow:hidden;color:#000;font-size:12px;text-align:left;"><div style="position:absolute;left:0;right:0;top:12.0px;"><div style="height:16px;line-height:16px;padding-left:2.50px;"><span style="letter-spacing:-0.511px">D</span><span style="letter-spacing:0.290px">isparu</span><span style="letter-spacing:0.781px">/</span><span style="letter-spacing:0.290px">volé</span></div></div></div>
<div class="t" style="left:393px;top:393px;width:550px;height:38px;overflow:hidden;color:#000;font-size:12px;text-align:left;"><div style="position:absolute;left:0;right:0;top:4.0px;"><div style="height:16px;line-height:16px;padding-left:2.60px;"><span style="letter-spacing:-0.550px">REMPLACEMENT</span><span style="letter-spacing:0.664px"> </span><span style="letter-spacing:-0.550px">DE</span><span style="letter-spacing:0.664px"> </span><span style="letter-spacing:-0.550px">VOTRE</span><span style="letter-spacing:0.664px"> </span><span style="letter-spacing:-0.550px">BAC</span><span style="letter-spacing:0.664px"> </span><span style="letter-spacing:-0.550px">POUBELLE</span><span style="letter-spacing:0.664px"> </span><span style="letter-spacing:-0.550px">LE</span><span style="letter-spacing:0.664px"> </span><span style="letter-spacing:-0.550px">@DATEPREVUE</span><span style="letter-spacing:0.664px"> </span><span style="letter-spacing:0.251px">devant</span><span style="letter-spacing:0.664px"> </span><span style="letter-spacing:0.251px">le</span><span style="letter-spacing:0.664px"> </span><span style="letter-spacing:-0.550px">@ADRESSE</span><span style="letter-spacing:0.664px"> </span><span style="letter-spacing:-0.550px">@REPARATIONS</span></div><div style="height:16px;line-height:16px;padding-left:2.60px;"><span style="letter-spacing:-0.490px">S</span><span style="letter-spacing:0.311px">i</span><span style="letter-spacing:0.724px"> </span><span style="letter-spacing:0.311px">besoin</span><span style="letter-spacing:0.802px">,</span><span style="letter-spacing:0.724px"> </span><span style="letter-spacing:0.311px">contactez</span><span style="letter-spacing:0.802px">-</span><span style="letter-spacing:0.311px">nous</span><span style="letter-spacing:0.724px"> </span><span style="letter-spacing:0.311px">avant</span><span style="letter-spacing:0.724px"> </span><span style="letter-spacing:0.802px">17</span><span style="letter-spacing:0.311px">h</span><span style="letter-spacing:0.724px"> </span><span style="letter-spacing:0.311px">au</span><span style="letter-spacing:0.724px"> </span><span style="letter-spacing:-0.490px">@NUMVERT</span><span style="letter-spacing:0.724px"> </span><span style="letter-spacing:0.802px">(</span><span style="letter-spacing:0.311px">prix</span><span style="letter-spacing:0.724px"> </span><span style="letter-spacing:0.311px">d</span><span style="letter-spacing:0.802px">'</span><span style="letter-spacing:0.311px">un</span><span style="letter-spacing:0.724px"> </span><span style="letter-spacing:0.311px">appel</span><span style="letter-spacing:0.724px"> </span><span style="letter-spacing:0.311px">local</span><span style="letter-spacing:0.802px">)</span></div></div></div>
<div class="t" style="left:945px;top:393px;width:42px;height:38px;overflow:hidden;color:#000;font-size:12px;text-align:center;"><div style="position:absolute;left:0;right:0;top:12.0px;"><div style="height:16px;line-height:16px;padding-left:0px;"><span style="letter-spacing:0.69px">1</span></div></div></div>
<div class="t" style="left:987px;top:393px;width:46px;height:38px;overflow:hidden;color:#000;font-size:12px;text-align:center;"><div style="position:absolute;left:0;right:0;top:12.0px;"><div style="height:16px;line-height:16px;padding-left:0px;"><span style="letter-spacing:0.69px">46</span></div></div></div>
<div class="r" style="left:2px;top:431px;width:1032px;height:1px;background:#c6c6c6;"></div>
<div class="t" style="left:2px;top:432px;width:164px;height:38px;overflow:hidden;color:#000;font-size:12px;text-align:left;"><div style="position:absolute;left:0;right:0;top:12.0px;"><div style="height:16px;line-height:16px;padding-left:15.00px;"><span style="letter-spacing:-0.566px">R</span><span style="letter-spacing:0.235px">oyaume</span><span style="letter-spacing:0.648px"> </span><span style="letter-spacing:0.235px">des</span><span style="letter-spacing:0.648px"> </span><span style="letter-spacing:-0.566px">P</span><span style="letter-spacing:0.235px">oubelles</span></div></div></div>
<div class="r" style="left:182px;top:445px;width:13px;height:13px;background:#fff;"></div>
<div class="r" style="left:182px;top:445px;width:12px;height:1px;background:#a0a0a0;"></div>
<div class="r" style="left:182px;top:445px;width:1px;height:12px;background:#a0a0a0;"></div>
<div class="r" style="left:183px;top:446px;width:10px;height:1px;background:#696969;"></div>
<div class="r" style="left:183px;top:446px;width:1px;height:10px;background:#696969;"></div>
<svg class="r" style="left:182px;top:445px" width="13" height="13" viewBox="0 0 13 13"><path d="M3.5 5.4 L5.5 8.7 L9.5 3.4" fill="none" stroke="#000" stroke-width="1.9"/></svg>
<div class="t" style="left:212px;top:432px;width:181px;height:38px;overflow:hidden;color:#000;font-size:12px;text-align:left;"><div style="position:absolute;left:0;right:0;top:12.0px;"><div style="height:16px;line-height:16px;padding-left:2.50px;"><span style="letter-spacing:-0.447px">C</span><span style="letter-spacing:0.354px">assé</span><span style="letter-spacing:0.845px">/</span><span style="letter-spacing:0.354px">détruit</span></div></div></div>
<div class="t" style="left:393px;top:432px;width:550px;height:38px;overflow:hidden;color:#000;font-size:12px;text-align:left;"><div style="position:absolute;left:0;right:0;top:4.0px;"><div style="height:16px;line-height:16px;padding-left:2.60px;"><span style="letter-spacing:-0.524px">REMPLACEMENT</span><span style="letter-spacing:0.690px"> </span><span style="letter-spacing:-0.524px">DE</span><span style="letter-spacing:0.690px"> </span><span style="letter-spacing:-0.524px">VOTRE</span><span style="letter-spacing:0.690px"> </span><span style="letter-spacing:-0.524px">BAC</span><span style="letter-spacing:0.690px"> </span><span style="letter-spacing:-0.524px">POUBELLE</span><span style="letter-spacing:0.690px"> </span><span style="letter-spacing:-0.524px">LE</span><span style="letter-spacing:0.690px"> </span><span style="letter-spacing:-0.524px">@DATEPREVUE</span><span style="letter-spacing:0.768px">.</span><span style="letter-spacing:0.690px"> </span><span style="letter-spacing:-0.524px">N</span><span style="letter-spacing:0.277px">ous</span><span style="letter-spacing:0.690px"> </span><span style="letter-spacing:0.277px">devons</span><span style="letter-spacing:0.690px"> </span><span style="letter-spacing:0.277px">récupérer</span><span style="letter-spacing:0.690px"> </span><span style="letter-spacing:0.277px">votre</span><span style="letter-spacing:0.690px"> </span><span style="letter-spacing:0.277px">ancienne</span><span style="letter-spacing:0.690px"> </span><span style="letter-spacing:0.277px">poubelle</span></div><div style="height:16px;line-height:16px;padding-left:2.60px;"><span style="letter-spacing:-0.488px">E</span><span style="letter-spacing:0.313px">n</span><span style="letter-spacing:0.726px"> </span><span style="letter-spacing:0.313px">cas</span><span style="letter-spacing:0.726px"> </span><span style="letter-spacing:0.313px">d</span><span style="letter-spacing:0.804px">'</span><span style="letter-spacing:0.313px">impossibilité</span><span style="letter-spacing:0.804px">,</span><span style="letter-spacing:0.726px"> </span><span style="letter-spacing:0.313px">contactez</span><span style="letter-spacing:0.804px">-</span><span style="letter-spacing:0.313px">nous</span><span style="letter-spacing:0.726px"> </span><span style="letter-spacing:0.313px">avant</span><span style="letter-spacing:0.726px"> </span><span style="letter-spacing:0.804px">17</span><span style="letter-spacing:0.313px">h</span><span style="letter-spacing:0.726px"> </span><span style="letter-spacing:0.313px">au</span><span style="letter-spacing:0.726px"> </span><span style="letter-spacing:-0.488px">@NUMVERT</span><span style="letter-spacing:0.726px"> </span><span style="letter-spacing:0.313px">pour</span><span style="letter-spacing:0.726px"> </span><span style="letter-spacing:0.313px">fixer</span><span style="letter-spacing:0.726px"> </span><span style="letter-spacing:0.313px">un</span><span style="letter-spacing:0.726px"> </span><span style="letter-spacing:0.313px">autre</span><span style="letter-spacing:0.726px"> </span><span style="letter-spacing:-0.488px">RDV</span><span style="letter-spacing:0.726px"> </span><span style="letter-spacing:0.804px">(</span><span style="letter-spacing:0.313px">prix</span><span style="letter-spacing:0.726px"> </span><span style="letter-spacing:0.313px">d</span><span style="letter-spacing:0.804px">'</span><span style="letter-spacing:0.313px">un</span><span style="letter-spacing:0.726px"> </span><span style="letter-spacing:0.313px">appel</span><span style="letter-spacing:0.726px"> </span><span style="letter-spacing:0.313px">local</span><span style="letter-spacing:0.804px">)</span></div></div></div>
<div class="t" style="left:945px;top:432px;width:42px;height:38px;overflow:hidden;color:#000;font-size:12px;text-align:center;"><div style="position:absolute;left:0;right:0;top:12.0px;"><div style="height:16px;line-height:16px;padding-left:0px;"><span style="letter-spacing:0.69px">2</span></div></div></div>
<div class="t" style="left:987px;top:432px;width:46px;height:38px;overflow:hidden;color:#000;font-size:12px;text-align:center;"><div style="position:absolute;left:0;right:0;top:12.0px;"><div style="height:16px;line-height:16px;padding-left:0px;"><span style="letter-spacing:0.69px">62</span></div></div></div>
<div class="r" style="left:2px;top:470px;width:1032px;height:1px;background:#c6c6c6;"></div>
<div class="t" style="left:2px;top:471px;width:164px;height:38px;overflow:hidden;color:#000;font-size:12px;text-align:left;"><div style="position:absolute;left:0;right:0;top:12.0px;"><div style="height:16px;line-height:16px;padding-left:15.00px;"><span style="letter-spacing:-0.566px">R</span><span style="letter-spacing:0.235px">oyaume</span><span style="letter-spacing:0.648px"> </span><span style="letter-spacing:0.235px">des</span><span style="letter-spacing:0.648px"> </span><span style="letter-spacing:-0.566px">P</span><span style="letter-spacing:0.235px">oubelles</span></div></div></div>
<div class="r" style="left:182px;top:484px;width:13px;height:13px;background:#fff;"></div>
<div class="r" style="left:182px;top:484px;width:12px;height:1px;background:#a0a0a0;"></div>
<div class="r" style="left:182px;top:484px;width:1px;height:12px;background:#a0a0a0;"></div>
<div class="r" style="left:183px;top:485px;width:10px;height:1px;background:#696969;"></div>
<div class="r" style="left:183px;top:485px;width:1px;height:10px;background:#696969;"></div>
<svg class="r" style="left:182px;top:484px" width="13" height="13" viewBox="0 0 13 13"><path d="M3.5 5.4 L5.5 8.7 L9.5 3.4" fill="none" stroke="#000" stroke-width="1.9"/></svg>
<div class="t" style="left:212px;top:471px;width:181px;height:38px;overflow:hidden;color:#000;font-size:12px;text-align:left;"><div style="position:absolute;left:0;right:0;top:12.0px;"><div style="height:16px;line-height:16px;padding-left:2.50px;"><span style="letter-spacing:-0.564px">B</span><span style="letter-spacing:0.237px">rûlés</span></div></div></div>
<div class="t" style="left:393px;top:471px;width:550px;height:38px;overflow:hidden;color:#000;font-size:12px;text-align:left;"><div style="position:absolute;left:0;right:0;top:4.0px;"><div style="height:16px;line-height:16px;padding-left:2.60px;"><span style="letter-spacing:-0.524px">REMPLACEMENT</span><span style="letter-spacing:0.690px"> </span><span style="letter-spacing:-0.524px">DE</span><span style="letter-spacing:0.690px"> </span><span style="letter-spacing:-0.524px">VOTRE</span><span style="letter-spacing:0.690px"> </span><span style="letter-spacing:-0.524px">BAC</span><span style="letter-spacing:0.690px"> </span><span style="letter-spacing:-0.524px">POUBELLE</span><span style="letter-spacing:0.690px"> </span><span style="letter-spacing:-0.524px">LE</span><span style="letter-spacing:0.690px"> </span><span style="letter-spacing:-0.524px">@DATEPREVUE</span><span style="letter-spacing:0.768px">.</span><span style="letter-spacing:0.690px"> </span><span style="letter-spacing:-0.524px">N</span><span style="letter-spacing:0.277px">ous</span><span style="letter-spacing:0.690px"> </span><span style="letter-spacing:0.277px">devons</span><span style="letter-spacing:0.690px"> </span><span style="letter-spacing:0.277px">récupérer</span><span style="letter-spacing:0.690px"> </span><span style="letter-spacing:0.277px">votre</span><span style="letter-spacing:0.690px"> </span><span style="letter-spacing:0.277px">ancienne</span><span style="letter-spacing:0.690px"> </span><span style="letter-spacing:0.277px">poubelle</span></div><div style="height:16px;line-height:16px;padding-left:2.60px;"><span style="letter-spacing:-0.488px">E</span><span style="letter-spacing:0.313px">n</span><span style="letter-spacing:0.726px"> </span><span style="letter-spacing:0.313px">cas</span><span style="letter-spacing:0.726px"> </span><span style="letter-spacing:0.313px">d</span><span style="letter-spacing:0.804px">'</span><span style="letter-spacing:0.313px">impossibilité</span><span style="letter-spacing:0.804px">,</span><span style="letter-spacing:0.726px"> </span><span style="letter-spacing:0.313px">contactez</span><span style="letter-spacing:0.804px">-</span><span style="letter-spacing:0.313px">nous</span><span style="letter-spacing:0.726px"> </span><span style="letter-spacing:0.313px">avant</span><span style="letter-spacing:0.726px"> </span><span style="letter-spacing:0.804px">17</span><span style="letter-spacing:0.313px">h</span><span style="letter-spacing:0.726px"> </span><span style="letter-spacing:0.313px">au</span><span style="letter-spacing:0.726px"> </span><span style="letter-spacing:-0.488px">@NUMVERT</span><span style="letter-spacing:0.726px"> </span><span style="letter-spacing:0.313px">pour</span><span style="letter-spacing:0.726px"> </span><span style="letter-spacing:0.313px">fixer</span><span style="letter-spacing:0.726px"> </span><span style="letter-spacing:0.313px">un</span><span style="letter-spacing:0.726px"> </span><span style="letter-spacing:0.313px">autre</span><span style="letter-spacing:0.726px"> </span><span style="letter-spacing:-0.488px">RDV</span><span style="letter-spacing:0.726px"> </span><span style="letter-spacing:0.804px">(</span><span style="letter-spacing:0.313px">prix</span><span style="letter-spacing:0.726px"> </span><span style="letter-spacing:0.313px">d</span><span style="letter-spacing:0.804px">'</span><span style="letter-spacing:0.313px">un</span><span style="letter-spacing:0.726px"> </span><span style="letter-spacing:0.313px">appel</span><span style="letter-spacing:0.726px"> </span><span style="letter-spacing:0.313px">local</span><span style="letter-spacing:0.804px">)</span></div></div></div>
<div class="t" style="left:945px;top:471px;width:42px;height:38px;overflow:hidden;color:#000;font-size:12px;text-align:center;"><div style="position:absolute;left:0;right:0;top:12.0px;"><div style="height:16px;line-height:16px;padding-left:0px;"><span style="letter-spacing:0.69px">2</span></div></div></div>
<div class="t" style="left:987px;top:471px;width:46px;height:38px;overflow:hidden;color:#000;font-size:12px;text-align:center;"><div style="position:absolute;left:0;right:0;top:12.0px;"><div style="height:16px;line-height:16px;padding-left:0px;"><span style="letter-spacing:0.69px">62</span></div></div></div>
<div class="r" style="left:2px;top:509px;width:1032px;height:1px;background:#c6c6c6;"></div>
<div class="t" style="left:2px;top:510px;width:164px;height:15px;overflow:hidden;color:#000;font-size:12px;text-align:left;"><div style="position:absolute;left:0;right:0;top:0.5px;"><div style="height:16px;line-height:16px;padding-left:15.00px;"><span style="letter-spacing:-0.566px">R</span><span style="letter-spacing:0.235px">oyaume</span><span style="letter-spacing:0.648px"> </span><span style="letter-spacing:0.235px">des</span><span style="letter-spacing:0.648px"> </span><span style="letter-spacing:-0.566px">P</span><span style="letter-spacing:0.235px">oubelles</span></div></div></div>
<div class="r" style="left:182px;top:511px;width:13px;height:13px;background:#fff;"></div>
<div class="r" style="left:182px;top:511px;width:12px;height:1px;background:#a0a0a0;"></div>
<div class="r" style="left:182px;top:511px;width:1px;height:12px;background:#a0a0a0;"></div>
<div class="r" style="left:183px;top:512px;width:10px;height:1px;background:#696969;"></div>
<div class="r" style="left:183px;top:512px;width:1px;height:10px;background:#696969;"></div>
<div class="t" style="left:212px;top:510px;width:181px;height:15px;overflow:hidden;color:#000;font-size:12px;text-align:left;"><div style="position:absolute;left:0;right:0;top:0.5px;"><div style="height:16px;line-height:16px;padding-left:2.50px;"><span style="letter-spacing:-0.431px">C</span><span style="letter-spacing:0.370px">orrection</span><span style="letter-spacing:0.861px">/</span><span style="letter-spacing:-0.431px">E</span><span style="letter-spacing:0.370px">nquête</span></div></div></div>
<div class="t" style="left:945px;top:510px;width:42px;height:15px;overflow:hidden;color:#000;font-size:12px;text-align:center;"><div style="position:absolute;left:0;right:0;top:0.5px;"><div style="height:16px;line-height:16px;padding-left:0px;"><span style="letter-spacing:0.69px">0</span></div></div></div>
<div class="t" style="left:987px;top:510px;width:46px;height:15px;overflow:hidden;color:#000;font-size:12px;text-align:center;"><div style="position:absolute;left:0;right:0;top:0.5px;"><div style="height:16px;line-height:16px;padding-left:0px;"><span style="letter-spacing:0.69px">0</span></div></div></div>
<div class="r" style="left:2px;top:525px;width:1032px;height:1px;background:#c6c6c6;"></div>
<div class="t" style="left:2px;top:526px;width:164px;height:15px;overflow:hidden;color:#000;font-size:12px;text-align:left;"><div style="position:absolute;left:0;right:0;top:0.5px;"><div style="height:16px;line-height:16px;padding-left:15.00px;"><span style="letter-spacing:-0.566px">R</span><span style="letter-spacing:0.235px">oyaume</span><span style="letter-spacing:0.648px"> </span><span style="letter-spacing:0.235px">des</span><span style="letter-spacing:0.648px"> </span><span style="letter-spacing:-0.566px">P</span><span style="letter-spacing:0.235px">oubelles</span></div></div></div>
<div class="r" style="left:182px;top:527px;width:13px;height:13px;background:#fff;"></div>
<div class="r" style="left:182px;top:527px;width:12px;height:1px;background:#a0a0a0;"></div>
<div class="r" style="left:182px;top:527px;width:1px;height:12px;background:#a0a0a0;"></div>
<div class="r" style="left:183px;top:528px;width:10px;height:1px;background:#696969;"></div>
<div class="r" style="left:183px;top:528px;width:1px;height:10px;background:#696969;"></div>
<div class="t" style="left:212px;top:526px;width:181px;height:15px;overflow:hidden;color:#000;font-size:12px;text-align:left;"><div style="position:absolute;left:0;right:0;top:0.5px;"><div style="height:16px;line-height:16px;padding-left:2.50px;"><span style="letter-spacing:-0.648px">É</span><span style="letter-spacing:0.153px">change</span><span style="letter-spacing:0.566px"> </span><span style="letter-spacing:0.153px">lavage</span></div></div></div>
<div class="t" style="left:393px;top:526px;width:550px;height:15px;overflow:hidden;color:#000;font-size:12px;text-align:left;"><div style="position:absolute;left:0;right:0;top:0.5px;"><div style="height:16px;line-height:16px;padding-left:2.60px;"><span style="letter-spacing:-0.536px">NOUS</span><span style="letter-spacing:0.678px"> </span><span style="letter-spacing:-0.536px">DEVONS</span><span style="letter-spacing:0.678px"> </span><span style="letter-spacing:-0.536px">LAVER</span><span style="letter-spacing:0.678px"> </span><span style="letter-spacing:-0.536px">VOTRE</span><span style="letter-spacing:0.678px"> </span><span style="letter-spacing:-0.536px">BAC</span><span style="letter-spacing:0.678px"> </span><span style="letter-spacing:-0.536px">POUBELLE</span><span style="letter-spacing:0.678px"> </span><span style="letter-spacing:-0.536px">LE</span><span style="letter-spacing:0.678px"> </span><span style="letter-spacing:-0.536px">@DATEPREVU</span><span style="letter-spacing:0.756px">.</span><span style="letter-spacing:0.678px"> </span><span style="letter-spacing:-0.536px">N</span><span style="letter-spacing:0.265px">ous</span><span style="letter-spacing:0.678px"> </span><span style="letter-spacing:0.265px">vous</span><span style="letter-spacing:0.678px"> </span><span style="letter-spacing:0.265px">prions</span><span style="letter-spacing:0.678px"> </span><span style="letter-spacing:0.265px">de</span><span style="letter-spacing:0.678px"> </span><span style="letter-spacing:0.265px">le</span><span style="letter-spacing:0.678px"> </span><span style="letter-spacing:0.265px">laisser</span><span style="letter-spacing:0.678px"> </span><span style="letter-spacing:0.265px">sortir</span></div></div></div>
<div class="t" style="left:945px;top:526px;width:42px;height:15px;overflow:hidden;color:#000;font-size:12px;text-align:center;"><div style="position:absolute;left:0;right:0;top:0.5px;"><div style="height:16px;line-height:16px;padding-left:0px;"><span style="letter-spacing:0.69px">1</span></div></div></div>
<div class="t" style="left:987px;top:526px;width:46px;height:15px;overflow:hidden;color:#000;font-size:12px;text-align:center;"><div style="position:absolute;left:0;right:0;top:0.5px;"><div style="height:16px;line-height:16px;padding-left:0px;"><span style="letter-spacing:0.69px">59</span></div></div></div>
<div class="r" style="left:2px;top:541px;width:1032px;height:1px;background:#c6c6c6;"></div>
<div class="t" style="left:2px;top:542px;width:164px;height:38px;overflow:hidden;color:#000;font-size:12px;text-align:left;"><div style="position:absolute;left:0;right:0;top:12.0px;"><div style="height:16px;line-height:16px;padding-left:15.00px;"><span style="letter-spacing:-0.566px">R</span><span style="letter-spacing:0.235px">oyaume</span><span style="letter-spacing:0.648px"> </span><span style="letter-spacing:0.235px">des</span><span style="letter-spacing:0.648px"> </span><span style="letter-spacing:-0.566px">P</span><span style="letter-spacing:0.235px">oubelles</span></div></div></div>
<div class="r" style="left:182px;top:555px;width:13px;height:13px;background:#fff;"></div>
<div class="r" style="left:182px;top:555px;width:12px;height:1px;background:#a0a0a0;"></div>
<div class="r" style="left:182px;top:555px;width:1px;height:12px;background:#a0a0a0;"></div>
<div class="r" style="left:183px;top:556px;width:10px;height:1px;background:#696969;"></div>
<div class="r" style="left:183px;top:556px;width:1px;height:10px;background:#696969;"></div>
<svg class="r" style="left:182px;top:555px" width="13" height="13" viewBox="0 0 13 13"><path d="M3.5 5.4 L5.5 8.7 L9.5 3.4" fill="none" stroke="#000" stroke-width="1.9"/></svg>
<div class="t" style="left:212px;top:542px;width:181px;height:38px;overflow:hidden;color:#000;font-size:12px;text-align:left;"><div style="position:absolute;left:0;right:0;top:12.0px;"><div style="height:16px;line-height:16px;padding-left:2.50px;"><span style="letter-spacing:-0.497px">R</span><span style="letter-spacing:0.304px">éparations</span><span style="letter-spacing:0.717px"> </span><span style="letter-spacing:0.304px">seules</span></div></div></div>
<div class="t" style="left:393px;top:542px;width:550px;height:38px;overflow:hidden;color:#000;font-size:12px;text-align:left;"><div style="position:absolute;left:0;right:0;top:4.0px;"><div style="height:16px;line-height:16px;padding-left:2.60px;"><span style="letter-spacing:-0.476px">REPARATION</span><span style="letter-spacing:0.738px"> </span><span style="letter-spacing:-0.476px">DE</span><span style="letter-spacing:0.738px"> </span><span style="letter-spacing:-0.476px">VOTRE</span><span style="letter-spacing:0.738px"> </span><span style="letter-spacing:-0.476px">BAC</span><span style="letter-spacing:0.738px"> </span><span style="letter-spacing:-0.476px">POUBELLE</span><span style="letter-spacing:0.738px"> </span><span style="letter-spacing:-0.476px">LE</span><span style="letter-spacing:0.738px"> </span><span style="letter-spacing:-0.476px">@DATEPREVUE</span><span style="letter-spacing:0.816px">.</span><span style="letter-spacing:0.738px"> </span><span style="letter-spacing:-0.476px">M</span><span style="letter-spacing:0.325px">erci</span><span style="letter-spacing:0.738px"> </span><span style="letter-spacing:0.325px">de</span><span style="letter-spacing:0.738px"> </span><span style="letter-spacing:0.325px">le</span><span style="letter-spacing:0.738px"> </span><span style="letter-spacing:0.325px">sortir</span><span style="letter-spacing:0.738px">&nbsp;&nbsp;</span><span style="letter-spacing:0.325px">la</span><span style="letter-spacing:0.738px"> </span><span style="letter-spacing:0.325px">veille</span><span style="letter-spacing:0.738px"> </span><span style="letter-spacing:0.325px">à</span><span style="letter-spacing:0.738px"> </span><span style="letter-spacing:0.325px">partir</span><span style="letter-spacing:0.738px"> </span><span style="letter-spacing:0.325px">de</span><span style="letter-spacing:0.738px"> </span><span style="letter-spacing:0.816px">19</span><span style="letter-spacing:0.325px">h</span></div><div style="height:16px;line-height:16px;padding-left:2.60px;"><span style="letter-spacing:-0.484px">E</span><span style="letter-spacing:0.317px">n</span><span style="letter-spacing:0.730px"> </span><span style="letter-spacing:0.317px">cas</span><span style="letter-spacing:0.730px"> </span><span style="letter-spacing:0.317px">d</span><span style="letter-spacing:0.808px">'</span><span style="letter-spacing:0.317px">impossibilité</span><span style="letter-spacing:0.808px">,</span><span style="letter-spacing:0.730px"> </span><span style="letter-spacing:0.317px">contactez</span><span style="letter-spacing:0.730px"> </span><span style="letter-spacing:0.317px">nous</span><span style="letter-spacing:0.730px"> </span><span style="letter-spacing:0.317px">avant</span><span style="letter-spacing:0.730px"> </span><span style="letter-spacing:0.808px">17</span><span style="letter-spacing:0.317px">h</span><span style="letter-spacing:0.730px"> </span><span style="letter-spacing:0.317px">au</span><span style="letter-spacing:0.730px"> </span><span style="letter-spacing:-0.484px">@NUMVERT</span><span style="letter-spacing:0.730px"> </span><span style="letter-spacing:0.317px">pour</span><span style="letter-spacing:0.730px"> </span><span style="letter-spacing:0.317px">fixer</span><span style="letter-spacing:0.730px"> </span><span style="letter-spacing:0.317px">un</span><span style="letter-spacing:0.730px"> </span><span style="letter-spacing:0.317px">autre</span><span style="letter-spacing:0.730px"> </span><span style="letter-spacing:-0.484px">RDV</span><span style="letter-spacing:0.730px"> </span><span style="letter-spacing:0.808px">(</span><span style="letter-spacing:0.317px">prix</span><span style="letter-spacing:0.730px"> </span><span style="letter-spacing:0.317px">d</span><span style="letter-spacing:0.808px">'</span><span style="letter-spacing:0.317px">un</span><span style="letter-spacing:0.730px"> </span><span style="letter-spacing:0.317px">appel</span><span style="letter-spacing:0.730px"> </span><span style="letter-spacing:0.317px">local</span><span style="letter-spacing:0.808px">)</span></div></div></div>
<div class="t" style="left:945px;top:542px;width:42px;height:38px;overflow:hidden;color:#000;font-size:12px;text-align:center;"><div style="position:absolute;left:0;right:0;top:12.0px;"><div style="height:16px;line-height:16px;padding-left:0px;"><span style="letter-spacing:0.69px">2</span></div></div></div>
<div class="t" style="left:987px;top:542px;width:46px;height:38px;overflow:hidden;color:#000;font-size:12px;text-align:center;"><div style="position:absolute;left:0;right:0;top:12.0px;"><div style="height:16px;line-height:16px;padding-left:0px;"><span style="letter-spacing:0.69px">111</span></div></div></div>
<div class="r" style="left:2px;top:580px;width:1032px;height:1px;background:#c6c6c6;"></div>
<div class="r" style="left:2px;top:581px;width:1032px;height:38px;background:#0080ff;"></div>
<div class="t" style="left:2px;top:581px;width:164px;height:38px;overflow:hidden;color:#fff;font-size:12px;text-align:left;"><div style="position:absolute;left:0;right:0;top:12.0px;"><div style="height:16px;line-height:16px;padding-left:15.00px;"><span style="letter-spacing:-0.566px">R</span><span style="letter-spacing:0.235px">oyaume</span><span style="letter-spacing:0.648px"> </span><span style="letter-spacing:0.235px">des</span><span style="letter-spacing:0.648px"> </span><span style="letter-spacing:-0.566px">P</span><span style="letter-spacing:0.235px">oubelles</span></div></div></div>
<div class="r" style="left:182px;top:594px;width:13px;height:13px;background:#fff;"></div>
<div class="r" style="left:182px;top:594px;width:12px;height:1px;background:#a0a0a0;"></div>
<div class="r" style="left:182px;top:594px;width:1px;height:12px;background:#a0a0a0;"></div>
<div class="r" style="left:183px;top:595px;width:10px;height:1px;background:#696969;"></div>
<div class="r" style="left:183px;top:595px;width:1px;height:10px;background:#696969;"></div>
<svg class="r" style="left:182px;top:594px" width="13" height="13" viewBox="0 0 13 13"><path d="M3.5 5.4 L5.5 8.7 L9.5 3.4" fill="none" stroke="#000" stroke-width="1.9"/></svg>
<div class="t" style="left:212px;top:581px;width:181px;height:38px;overflow:hidden;color:#fff;font-size:12px;text-align:left;"><div style="position:absolute;left:0;right:0;top:4.0px;"><div style="height:16px;line-height:16px;padding-left:2.50px;"><span style="letter-spacing:-0.413px">R</span><span style="letter-spacing:0.388px">éparations</span><span style="letter-spacing:0.801px"> </span><span style="letter-spacing:0.388px">complémentaires</span></div><div style="height:16px;line-height:16px;padding-left:2.50px;"><span style="letter-spacing:-0.219px">@REPARATIONS</span></div></div></div>
<div class="t" style="left:393px;top:581px;width:550px;height:38px;overflow:hidden;color:#fff;font-size:12px;text-align:left;"><div style="position:absolute;left:0;right:0;top:4.0px;"><div style="height:16px;line-height:16px;padding-left:2px;">&nbsp;</div><div style="height:16px;line-height:16px;padding-left:2.60px;"><span style="letter-spacing:0.828px">+</span><span style="letter-spacing:0.750px"> </span><span style="letter-spacing:-0.464px">REPARATION</span><span style="letter-spacing:0.750px"> </span><span style="letter-spacing:-0.464px">DE</span><span style="letter-spacing:0.750px"> </span><span style="letter-spacing:-0.464px">VOTRE</span><span style="letter-spacing:0.750px"> </span><span style="letter-spacing:-0.464px">BAC</span><span style="letter-spacing:0.750px"> </span><span style="letter-spacing:-0.464px">POUBELLE</span><span style="letter-spacing:0.828px">.</span><span style="letter-spacing:0.750px"> </span><span style="letter-spacing:-0.464px">N</span><span style="letter-spacing:0.828px">'</span><span style="letter-spacing:0.337px">oubliez</span><span style="letter-spacing:0.750px"> </span><span style="letter-spacing:0.337px">pas</span><span style="letter-spacing:0.750px"> </span><span style="letter-spacing:0.337px">de</span><span style="letter-spacing:0.750px"> </span><span style="letter-spacing:0.337px">le</span><span style="letter-spacing:0.750px"> </span><span style="letter-spacing:0.337px">sortir</span><span style="letter-spacing:0.750px"> </span><span style="letter-spacing:0.337px">la</span><span style="letter-spacing:0.750px"> </span><span style="letter-spacing:0.337px">veille</span><span style="letter-spacing:0.750px"> </span><span style="letter-spacing:0.337px">à</span><span style="letter-spacing:0.750px"> </span><span style="letter-spacing:0.337px">partir</span><span style="letter-spacing:0.750px"> </span><span style="letter-spacing:0.337px">de</span><span style="letter-spacing:0.750px"> </span><span style="letter-spacing:0.828px">19</span><span style="letter-spacing:0.337px">h</span></div></div></div>
<div class="t" style="left:945px;top:581px;width:42px;height:38px;overflow:hidden;color:#fff;font-size:12px;text-align:center;"><div style="position:absolute;left:0;right:0;top:12.0px;"><div style="height:16px;line-height:16px;padding-left:0px;"><span style="letter-spacing:0.69px">1</span></div></div></div>
<div class="t" style="left:987px;top:581px;width:46px;height:38px;overflow:hidden;color:#fff;font-size:12px;text-align:center;"><div style="position:absolute;left:0;right:0;top:12.0px;"><div style="height:16px;line-height:16px;padding-left:0px;"><span style="letter-spacing:0.69px">71</span></div></div></div>
<div class="r" style="left:2px;top:619px;width:1032px;height:1px;background:#c6c6c6;"></div>
<div class="r" style="left:2px;top:581px;width:1032px;height:38px;box-sizing:border-box;border:1px dotted #f08a1c;border-right-color:#000;"></div>
<div class="t" style="left:2px;top:620px;width:164px;height:38px;overflow:hidden;color:#000;font-size:12px;text-align:left;"><div style="position:absolute;left:0;right:0;top:12.0px;"><div style="height:16px;line-height:16px;padding-left:15.00px;"><span style="letter-spacing:-0.566px">R</span><span style="letter-spacing:0.235px">oyaume</span><span style="letter-spacing:0.648px"> </span><span style="letter-spacing:0.235px">des</span><span style="letter-spacing:0.648px"> </span><span style="letter-spacing:-0.566px">P</span><span style="letter-spacing:0.235px">oubelles</span></div></div></div>
<div class="r" style="left:182px;top:633px;width:13px;height:13px;background:#fff;"></div>
<div class="r" style="left:182px;top:633px;width:12px;height:1px;background:#a0a0a0;"></div>
<div class="r" style="left:182px;top:633px;width:1px;height:12px;background:#a0a0a0;"></div>
<div class="r" style="left:183px;top:634px;width:10px;height:1px;background:#696969;"></div>
<div class="r" style="left:183px;top:634px;width:1px;height:10px;background:#696969;"></div>
<svg class="r" style="left:182px;top:633px" width="13" height="13" viewBox="0 0 13 13"><path d="M3.5 5.4 L5.5 8.7 L9.5 3.4" fill="none" stroke="#000" stroke-width="1.9"/></svg>
<div class="t" style="left:212px;top:620px;width:181px;height:38px;overflow:hidden;color:#000;font-size:12px;text-align:left;"><div style="position:absolute;left:0;right:0;top:12.0px;"><div style="height:16px;line-height:16px;padding-left:2.50px;"><span style="letter-spacing:-0.431px">E</span><span style="letter-spacing:0.370px">ncombrants</span></div></div></div>
<div class="t" style="left:393px;top:620px;width:550px;height:38px;overflow:hidden;color:#000;font-size:12px;text-align:left;"><div style="position:absolute;left:0;right:0;top:4.0px;"><div style="height:16px;line-height:16px;padding-left:2.60px;"><span style="letter-spacing:-0.434px">RETRAIT</span><span style="letter-spacing:0.780px"> </span><span style="letter-spacing:-0.434px">D</span><span style="letter-spacing:0.858px">'</span><span style="letter-spacing:-0.434px">ENCOMBRANTS</span><span style="letter-spacing:0.780px"> </span><span style="letter-spacing:-0.434px">LE</span><span style="letter-spacing:0.780px"> </span><span style="letter-spacing:-0.434px">@DATEPREVUE</span><span style="letter-spacing:0.780px"> </span><span style="letter-spacing:0.367px">devant</span><span style="letter-spacing:0.780px"> </span><span style="letter-spacing:0.367px">le</span><span style="letter-spacing:0.780px"> </span><span style="letter-spacing:-0.434px">@ADRESSE</span></div><div style="height:16px;line-height:16px;padding-left:2.60px;"><span style="letter-spacing:-0.484px">E</span><span style="letter-spacing:0.317px">n</span><span style="letter-spacing:0.730px"> </span><span style="letter-spacing:0.317px">cas</span><span style="letter-spacing:0.730px"> </span><span style="letter-spacing:0.317px">d</span><span style="letter-spacing:0.808px">'</span><span style="letter-spacing:0.317px">impossibilité</span><span style="letter-spacing:0.808px">,</span><span style="letter-spacing:0.730px"> </span><span style="letter-spacing:0.317px">contactez</span><span style="letter-spacing:0.730px"> </span><span style="letter-spacing:0.317px">nous</span><span style="letter-spacing:0.730px"> </span><span style="letter-spacing:0.317px">avant</span><span style="letter-spacing:0.730px"> </span><span style="letter-spacing:0.808px">17</span><span style="letter-spacing:0.317px">h</span><span style="letter-spacing:0.730px"> </span><span style="letter-spacing:0.317px">au</span><span style="letter-spacing:0.730px"> </span><span style="letter-spacing:-0.484px">@NUMVERT</span><span style="letter-spacing:0.730px"> </span><span style="letter-spacing:0.317px">pour</span><span style="letter-spacing:0.730px"> </span><span style="letter-spacing:0.317px">fixer</span><span style="letter-spacing:0.730px"> </span><span style="letter-spacing:0.317px">un</span><span style="letter-spacing:0.730px"> </span><span style="letter-spacing:0.317px">autre</span><span style="letter-spacing:0.730px"> </span><span style="letter-spacing:-0.484px">RDV</span><span style="letter-spacing:0.730px"> </span><span style="letter-spacing:0.808px">(</span><span style="letter-spacing:0.317px">prix</span><span style="letter-spacing:0.730px"> </span><span style="letter-spacing:0.317px">d</span><span style="letter-spacing:0.808px">'</span><span style="letter-spacing:0.317px">un</span><span style="letter-spacing:0.730px"> </span><span style="letter-spacing:0.317px">appel</span><span style="letter-spacing:0.730px"> </span><span style="letter-spacing:0.317px">local</span><span style="letter-spacing:0.808px">)</span></div></div></div>
<div class="t" style="left:945px;top:620px;width:42px;height:38px;overflow:hidden;color:#000;font-size:12px;text-align:center;"><div style="position:absolute;left:0;right:0;top:12.0px;"><div style="height:16px;line-height:16px;padding-left:0px;"><span style="letter-spacing:0.69px">1</span></div></div></div>
<div class="t" style="left:987px;top:620px;width:46px;height:38px;overflow:hidden;color:#000;font-size:12px;text-align:center;"><div style="position:absolute;left:0;right:0;top:12.0px;"><div style="height:16px;line-height:16px;padding-left:0px;"><span style="letter-spacing:0.69px">23</span></div></div></div>
<div class="r" style="left:2px;top:658px;width:1032px;height:1px;background:#c6c6c6;"></div>
<div class="r" style="left:2px;top:674px;width:1032px;height:1px;background:#c6c6c6;"></div>
<div class="r" style="left:2px;top:690px;width:1032px;height:1px;background:#c6c6c6;"></div>
<div class="r" style="left:2px;top:706px;width:1032px;height:1px;background:#c6c6c6;"></div>
<div class="r" style="left:2px;top:722px;width:1032px;height:1px;background:#c6c6c6;"></div>
<div class="r" style="left:2px;top:738px;width:1032px;height:1px;background:#c6c6c6;"></div>
<div class="r" style="left:166px;top:237px;width:1px;height:514px;background:#c6c6c6;"></div>
<div class="r" style="left:212px;top:237px;width:1px;height:514px;background:#c6c6c6;"></div>
<div class="r" style="left:393px;top:237px;width:1px;height:514px;background:#c6c6c6;"></div>
<div class="r" style="left:945px;top:237px;width:1px;height:514px;background:#c6c6c6;"></div>
<div class="r" style="left:987px;top:237px;width:1px;height:514px;background:#c6c6c6;"></div>
<div class="r" style="left:1033px;top:237px;width:1px;height:514px;background:#c6c6c6;"></div>
<div class="r" style="left:1083px;top:238px;width:1px;height:513px;background:#cfcfcf;"></div>
<div class="r" style="left:1084px;top:237px;width:14px;height:514px;background:#fcfcfc;"></div>
<div class="r" style="left:1084px;top:238px;width:14px;height:15px;background:#f0f0f0;"></div>
<div class="r" style="left:1084px;top:253px;width:14px;height:1px;background:#e2e2e2;"></div>
<div class="r" style="left:1084px;top:735px;width:14px;height:15px;background:#f0f0f0;"></div>
<div class="r" style="left:1084px;top:734px;width:14px;height:1px;background:#e2e2e2;"></div>
<svg class="r" style="left:1086.5px;top:241px" width="10" height="8" viewBox="0 0 10 8"><path d="M1 6 L5 2 L9 6" fill="none" stroke="#a9c6e6" stroke-width="2"/></svg>
<svg class="r" style="left:1086px;top:738px" width="10" height="8" viewBox="0 0 10 8"><path d="M1 2 L5 6 L9 2" fill="none" stroke="#a9c6e6" stroke-width="2"/></svg>
<div class="r" style="left:2px;top:751px;width:1096px;height:1px;background:#a0a0a0;"></div>
<div class="r" style="left:2px;top:752px;width:1096px;height:1px;background:#fff;"></div>
<div class="t" style="left:20.80px;top:790.69px;font-size:11px;line-height:11px;transform:scaleX(0.9351);transform-origin:0 0;">Modifier</div>
<div class="t" style="left:93.00px;top:790.69px;font-size:11px;line-height:11px;transform:scaleX(0.8737);transform-origin:0 0;">Remplir</div>
<div class="t" style="left:487.80px;top:790.69px;font-size:11px;line-height:11px;transform:scaleX(0.9643);transform-origin:0 0;">Enregistrer</div>
<div class="t" style="left:1040.50px;top:790.69px;font-size:11px;line-height:11px;transform:scaleX(0.9654);transform-origin:0 0;">Retour</div>
<svg class="r" style="left:24px;top:759px" width="32" height="31" viewBox="0 0 32 31">
<path d="M1 2 Q1 0 3 0 L29 0 Q31 0 31 2 L31 17.5 Q31 19.5 29 19.5 L25 19.5 L25 17.5 L29 17.5 L29 5.5 L3 5.5 L3 17.5 L13 17.5 L11 19.5 L3 19.5 Q1 19.5 1 17.5 Z" fill="#4a87c2"/>
<rect x="5" y="8" width="12" height="2.2" rx="1.1" fill="#4a87c2"/>
<rect x="5" y="12" width="12" height="2.2" rx="1.1" fill="#4a87c2"/>
<rect x="20" y="8" width="7" height="2.2" rx="1.1" fill="#4a87c2"/>
<path d="M9.5 27.5 L19.5 17.8" stroke="#8e8e8e" stroke-width="4" stroke-linecap="round"/>
<path d="M18 16 L24.5 13.5 L21.8 19.5 Z" fill="#4a87c2"/>
</svg>
<svg class="r" style="left:93px;top:758px" width="34" height="33" viewBox="0 0 34 33">
<polygon points="23.20,0.90 24.85,5.93 29.56,3.54 27.17,8.25 32.20,9.90 27.17,11.55 29.56,16.26 24.85,13.87 23.20,18.90 21.55,13.87 16.84,16.26 19.23,11.55 14.20,9.90 19.23,8.25 16.84,3.54 21.55,5.93" fill="#f2b838"/>
<path d="M3.6 29.2 L21.6 11.3" stroke="#8e8e8e" stroke-width="3.8" stroke-linecap="round"/>
<path d="M15.5 17.2 L21.4 11.5" stroke="#fff" stroke-width="1.6" stroke-linecap="round"/>
<polygon points="21.00,20.80 21.71,22.89 23.80,23.60 21.71,24.31 21.00,26.40 20.29,24.31 18.20,23.60 20.29,22.89" fill="#f2b838"/>
<polygon points="28.20,23.70 29.05,26.45 31.80,27.30 29.05,28.15 28.20,30.90 27.35,28.15 24.60,27.30 27.35,26.45" fill="#f2b838"/>
</svg>
<svg class="r" style="left:503px;top:762px" width="22" height="24" viewBox="0 0 22 24">
<defs><linearGradient id="fg" x1="0" y1="0" x2="1" y2="0"><stop offset="0" stop-color="#c9def4"/><stop offset="0.35" stop-color="#6aa6e8"/><stop offset="1" stop-color="#1a7ef2"/></linearGradient></defs>
<rect x="0" y="0" width="22" height="24" rx="1.6" fill="#3b7fcc"/>
<rect x="1" y="1" width="20" height="22" fill="url(#fg)"/>
<rect x="5" y="1" width="12" height="8" fill="#ffffff"/>
<rect x="13" y="2" width="2" height="6" rx="0.8" fill="#2d86ee"/>
<rect x="3" y="11" width="17" height="12" fill="#ffffff"/>
</svg>
<svg class="r" style="left:1042px;top:758px" width="32" height="33" viewBox="0 0 32 33">
<defs><linearGradient id="xg" x1="0" y1="0" x2="0" y2="1"><stop offset="0" stop-color="#ff0000"/><stop offset="0.45" stop-color="#f00000"/><stop offset="1" stop-color="#820000"/></linearGradient></defs>
<path d="M0.8 2.1 Q8 4.5 13.7 8.2 Q18 3 24 0 L29.8 3.5 Q23 7 19.3 11 Q26 17 28.4 22.2 L24.5 27.9 Q21 20 16.5 14.7 Q10 22 8.5 31.1 Q5 26 6.4 23.6 Q8 16 12 10 Q7 5 0.8 2.1 Z" fill="url(#xg)"/>
</svg>
<svg class="r" style="left:1086px;top:798px" width="12" height="12" viewBox="0 0 12 12"><path d="M12 1 L1 12 M12 4.5 L4.5 12 M12 8 L8 12" stroke="#8a8a8a" stroke-width="1.2"/></svg>
<div class="r" style="left:0px;top:0px;width:1099px;height:1px;background:#0078d7;"></div>
<div class="r" style="left:0px;top:0px;width:1px;height:811px;background:#0078d7;"></div>
<div class="r" style="left:1098px;top:0px;width:1px;height:811px;background:#0078d7;"></div>
<div class="r" style="left:0px;top:810px;width:1099px;height:1px;background:#0078d7;"></div>
</body></html>
